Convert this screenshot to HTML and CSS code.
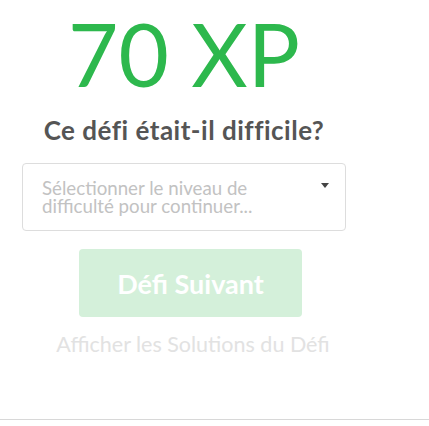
FILE: index.html
```html
<!DOCTYPE html>
<html lang="fr">
<head>
<meta charset="utf-8">
<link rel="stylesheet" href="styles.css">
</head>
<body>
<div class="panel">
  <div class="xp">70 XP</div>
  <h2 class="question">Ce défi était-il difficile?</h2>
  <div class="select">
    <span class="placeholder">Sélectionner le niveau de difficulté pour continuer...</span>
    <span class="caret"></span>
  </div>
  <button class="next" disabled>Défi Suivant</button>
  <a class="solutions">Afficher les Solutions du Défi</a>
</div>
<div class="rule"></div>
</body>
</html>
```
FILE: styles.css
```css
html, body {
  margin: 0;
  padding: 0;
  background: #fff;
}
body {
  font-family: Lato, "Noto Sans", sans-serif;
  width: 429px;
  height: 426px;
  overflow: hidden;
}
.panel {
  width: 368px;
  display: flex;
  flex-direction: column;
  align-items: center;
  padding-top: 6px;
  height: 413px;
}
.xp {
  font-size: 87px;
  line-height: 96px;
  color: #2db84d;
  font-weight: 400;
}
.question {
  margin: 12px 0 0 0;
  font-size: 26px;
  line-height: 32px;
  font-weight: 700;
  letter-spacing: 0.5px;
  color: #555;
}
.select {
  box-sizing: border-box;
  width: 324px;
  height: 68px;
  margin-top: 17px;
  border: 1px solid #ddd;
  border-radius: 4px;
  display: flex;
  align-items: flex-start;
  padding: 15px 16px 0 19px;
}
.placeholder {
  flex: 1;
  font-size: 18.7px;
  line-height: 18px;
  color: #c2c2c2;
  padding-right: 40px;
}
.caret {
  width: 0;
  height: 0;
  margin-top: 4px;
  border-left: 4px solid transparent;
  border-right: 4px solid transparent;
  border-top: 5px solid #444;
}
.next {
  margin-top: 18px;
  margin-left: 13px;
  width: 223px;
  height: 68px;
  border: none;
  border-radius: 4px;
  background: #d4f0da;
  color: #fff;
  font-family: Lato, "Noto Sans", sans-serif;
  font-size: 27px;
  font-weight: 700;
  padding: 0;
}
.solutions {
  margin-top: 15px;
  margin-left: 18px;
  font-size: 21.5px;
  line-height: 24px;
  color: #e2e2e2;
}
.rule {
  height: 1px;
  background: #d8d8d8;
}
```
